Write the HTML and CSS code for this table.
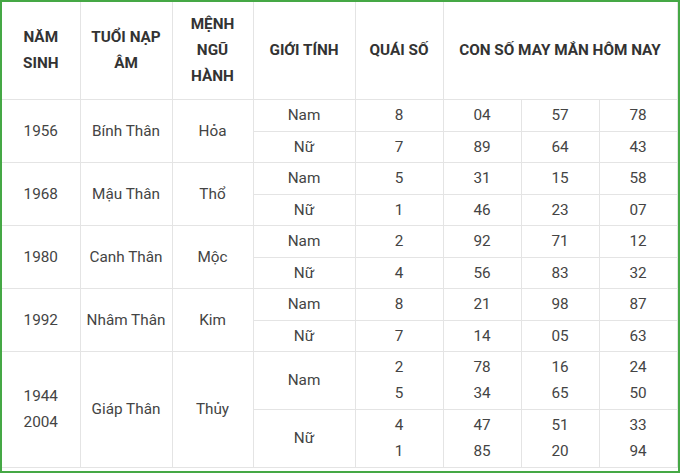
FILE: index.html
```html
<!DOCTYPE html>
<html lang="vi">
<head>
<meta charset="utf-8">
<title>Con số may mắn tuổi Thân</title>
<link rel="stylesheet" href="styles.css">
</head>
<body>
<div class="frame">
<table class="lucky">
  <colgroup>
    <col class="c-year"><col class="c-napam"><col class="c-menh"><col class="c-sex"><col class="c-quai"><col class="c-num"><col class="c-num"><col class="c-num-last">
  </colgroup>
  <thead>
    <tr>
      <th>NĂM<br>SINH</th>
      <th>TUỔI NẠP<br>ÂM</th>
      <th>MỆNH<br>NGŨ<br>HÀNH</th>
      <th>GIỚI TÍNH</th>
      <th>QUÁI SỐ</th>
      <th colspan="3">CON SỐ MAY MẮN HÔM NAY</th>
    </tr>
  </thead>
  <tbody>
    <tr class="r-a">
      <td rowspan="2">1956</td><td rowspan="2">Bính Thân</td><td rowspan="2">Hỏa</td>
      <td>Nam</td><td>8</td><td>04</td><td>57</td><td>78</td>
    </tr>
    <tr class="r-b">
      <td>Nữ</td><td>7</td><td>89</td><td>64</td><td>43</td>
    </tr>
    <tr class="r-a">
      <td rowspan="2">1968</td><td rowspan="2">Mậu Thân</td><td rowspan="2">Thổ</td>
      <td>Nam</td><td>5</td><td>31</td><td>15</td><td>58</td>
    </tr>
    <tr class="r-b">
      <td>Nữ</td><td>1</td><td>46</td><td>23</td><td>07</td>
    </tr>
    <tr class="r-a">
      <td rowspan="2">1980</td><td rowspan="2">Canh Thân</td><td rowspan="2">Mộc</td>
      <td>Nam</td><td>2</td><td>92</td><td>71</td><td>12</td>
    </tr>
    <tr class="r-b">
      <td>Nữ</td><td>4</td><td>56</td><td>83</td><td>32</td>
    </tr>
    <tr class="r-a">
      <td rowspan="2">1992</td><td rowspan="2">Nhâm Thân</td><td rowspan="2">Kim</td>
      <td>Nam</td><td>8</td><td>21</td><td>98</td><td>87</td>
    </tr>
    <tr class="r-b">
      <td>Nữ</td><td>7</td><td>14</td><td>05</td><td>63</td>
    </tr>
    <tr class="r-c">
      <td rowspan="2">1944<br>2004</td><td rowspan="2">Giáp Thân</td><td rowspan="2">Thủy</td>
      <td>Nam</td><td>2<br>5</td><td>78<br>34</td><td>16<br>65</td><td>24<br>50</td>
    </tr>
    <tr class="r-c">
      <td>Nữ</td><td>4<br>1</td><td>47<br>85</td><td>51<br>20</td><td>33<br>94</td>
    </tr>
  </tbody>
</table>
</div>
</body>
</html>
```

FILE: styles.css
```css
html, body {
  margin: 0;
  padding: 0;
  background: #ffffff;
}

.frame {
  box-sizing: border-box;
  width: 680px;
  height: 473px;
  border: 2px solid #45a845;
  padding: 0 1px 1px 0;
  overflow: hidden;
}

.lucky {
  width: 675px;
  border-collapse: collapse;
  table-layout: fixed;
  font-family: Roboto, "Liberation Sans", Arial, sans-serif;
  font-size: 15.3px;
  line-height: 26px;
  color: #444444;
}

.c-year { width: 78px; }
.c-napam { width: 92px; }
.c-menh { width: 81px; }
.c-sex { width: 102px; }
.c-quai { width: 88px; }
.c-num { width: 78px; }
.c-num-last { width: 78px; }

.lucky th,
.lucky td {
  border: 1px solid #e4e4e4;
  text-align: center;
  vertical-align: middle;
  padding: 2px 2px;
}

.lucky thead tr {
  height: 97px;
}

.lucky th {
  font-weight: 700;
  color: #333333;
  padding: 9px 2px;
  border-top: none;
}

.lucky tr > :first-child {
  border-left: none;
}

.r-a { height: 32px; }
.r-b { height: 31px; }
.r-c { height: 58px; }
```
